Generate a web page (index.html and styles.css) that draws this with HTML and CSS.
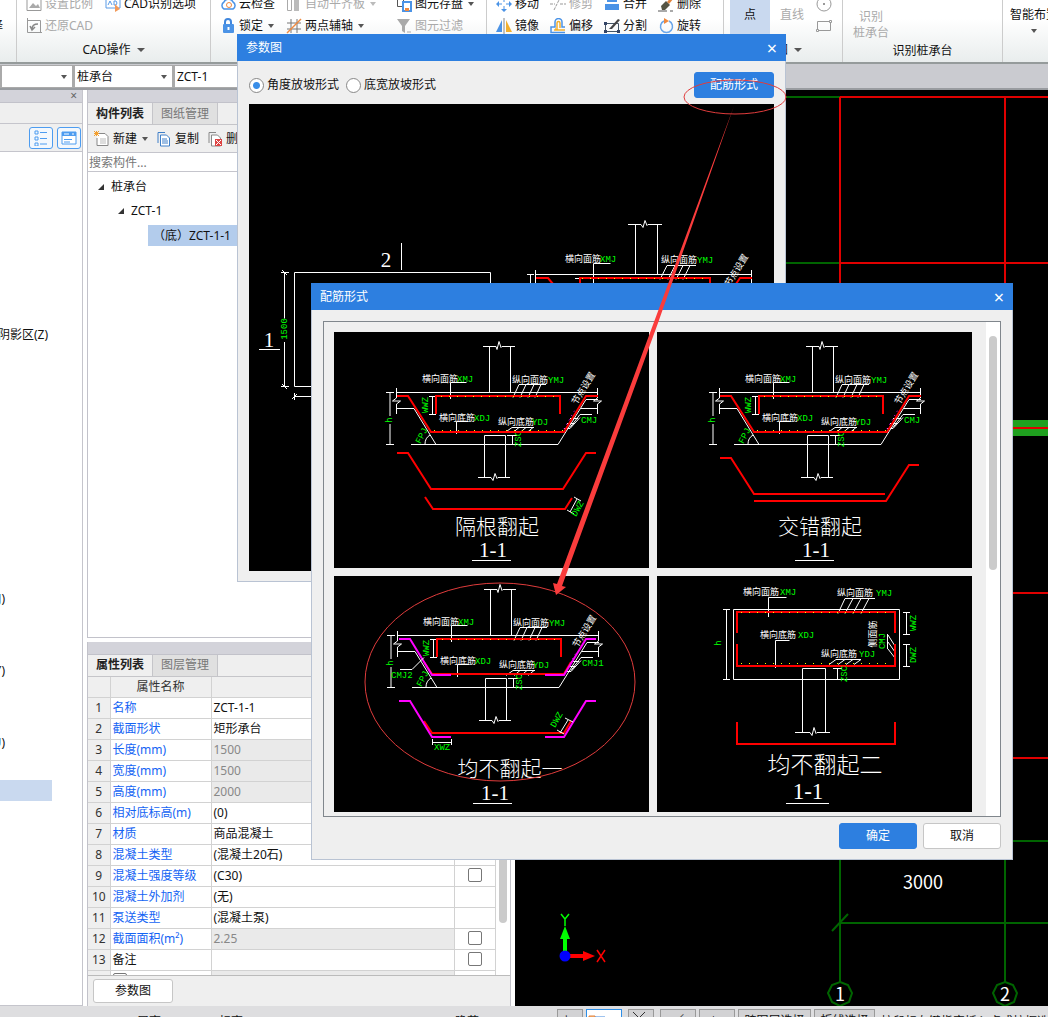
FILE: index.html
```html
<!DOCTYPE html>
<html lang="zh-CN">
<head>
    <meta charset="UTF-8">
    <meta name="viewport" content="width=device-width, initial-scale=1.0">
    <title>桩承台 - 配筋形式</title>
    <link rel="stylesheet" href="styles.css">
</head>
<body>
    <!-- Ribbon -->
    <header class="ribbon">
        <div class="group g-edge"><div class="tools"><button class="tool">选择</button></div><div class="group-label"></div></div>
        <div class="group g-cad">
            <div class="tools">
                <button class="tool" disabled><svg class="icon" viewBox="0 0 16 16"><path d="M1 2.500h14v12H1z" fill="none" stroke="#999"/><path d="M3 12l4-5 3 3 2-2 2 4z" fill="#aaa"/></svg>设置比例</button>
                <button class="tool"><svg class="icon" viewBox="0 0 16 16"><path d="M1 3h14v9H1z" fill="none" stroke="#5a9be6"/><path d="M3 9l2-4 2 4M9 5v4h2l1-2-1-2z" fill="none" stroke="#5a9be6"/><path d="M10 8l5 5-5 3z" fill="#f29a5a"/></svg>CAD识别选项</button>
                <button class="tool" disabled><svg class="icon" viewBox="0 0 16 16"><path d="M1.500 0v14.500H14M1.500 2.500h13V14M12 14.500h4" fill="none" stroke="#999"/><path d="M6 11c0-3 2-5 6-5M4 8l2 4 3-3" fill="none" stroke="#888" stroke-width="1.500"/></svg>还原CAD</button>
            </div>
            <div class="group-label">CAD操作 <i class="caret"></i></div>
        </div>
        <div class="group g-common">
            <div class="tools">
                <button class="tool"><svg class="icon" viewBox="0 0 16 16"><path d="M4 13a4 4 0 010-7 5 5 0 019 0 4 4 0 010 7z" fill="none" stroke="#4b93e6" stroke-width="1.500"/><circle cx="9" cy="9" r="2.500" fill="none" stroke="#f0893e"/></svg>云检查</button>
                <button class="tool" disabled><svg class="icon" viewBox="0 0 16 16"><path d="M1.500 2.500h4v12h-4z" fill="none" stroke="#aaa"/><path d="M8 2h5v13H8z" fill="#bbb"/></svg>自动平齐板 <i class="caret"></i></button>
                <button class="tool"><svg class="icon" viewBox="0 0 16 16"><path d="M1.500 2.500h6v8h-6z" fill="none" stroke="#555"/><path d="M7 6h8v9H7z" fill="#fff" stroke="#4b93e6" stroke-width="2"/><path d="M9 12h4v3H9z" fill="#f0893e"/></svg>图元存盘 <i class="caret"></i></button>
                <button class="tool"><svg class="icon" viewBox="0 0 16 16"><path d="M5 7V4a3 3 0 016 0v3" fill="none" stroke="#3f86dd" stroke-width="2"/><rect x="3" y="6" width="11" height="9" rx="1" fill="#4b93e6"/><path d="M8.500 9v3" stroke="#fff" stroke-width="2"/></svg>锁定 <i class="caret"></i></button>
                <button class="tool"><svg class="icon" viewBox="0 0 16 16"><path d="M5 1v14M11 1v14M1 5h14M1 11h14" stroke="#777"/><path d="M1 15L15 1" stroke="#f0893e" stroke-width="1.500"/></svg>两点辅轴 <i class="caret"></i></button>
                <button class="tool" disabled><svg class="icon" viewBox="0 0 16 16"><path d="M1 1h13L9 8v7l-3-2V8z" fill="#aaa"/><path d="M11 14h4" stroke="#aaa"/></svg>图元过滤</button>
            </div>
        </div>
        <div class="group g-modify">
            <div class="tools">
                <button class="tool"><svg class="icon" viewBox="0 0 16 16"><path d="M8 0l3 3H5zM8 16l3-3H5zM0 8l3-3v6zM16 8l-3-3v6z" fill="#4b93e6"/><path d="M8 3v3M8 10v3M3 8h3M10 8h3" stroke="#4b93e6"/></svg>移动</button>
                <button class="tool" disabled><svg class="icon" viewBox="0 0 16 16"><path d="M0 8h5M10 8h6M4 14L10 2" stroke="#999" stroke-dasharray="3 1"/></svg>修剪</button>
                <button class="tool"><svg class="icon" viewBox="0 0 16 16"><path d="M3 1h10v5H3zM1 8h14v6H1z" fill="#4b93e6"/></svg>合并</button>
                <button class="tool"><svg class="icon" viewBox="0 0 16 16"><path d="M9 6l5-6 2 2-5 6z" fill="#e2853f"/><path d="M3 10l5-5 4 4-5 5H4z" fill="#554"/><path d="M0 15h9M12 15h3" stroke="#555"/></svg>删除</button>
                <button class="tool"><svg class="icon" viewBox="0 0 16 16"><path d="M6 2v12H0z" fill="#4b93e6"/><path d="M10 2v12h6z" fill="#f3b02e"/><path d="M8 0v16" stroke="#888"/></svg>镜像</button>
                <button class="tool"><svg class="icon" viewBox="0 0 16 16"><path d="M15 14.500H1V9h4V4a3 3 0 017 0v5h3" fill="none" stroke="#4b93e6" stroke-width="1.500"/><path d="M4 12h11M7 10V5a1.500 1.500 0 013 0v5M5 11h3" fill="none" stroke="#f3b02e" stroke-width="1.500"/></svg>偏移</button>
                <button class="tool"><svg class="icon" viewBox="0 0 16 16"><path d="M1.500 5.500h13v8h-13z" fill="none" stroke="#456"/><path d="M0 4h3v3H0zM13 12h3v3h-3zM0 12h3v3H0z" fill="#346"/><path d="M5 11L14 1l2 1-8 9z" fill="#444"/></svg>分割</button>
                <button class="tool"><svg class="icon" viewBox="0 0 16 16"><path d="M6 3a6 6 0 105 0" fill="none" stroke="#6aa6ea" stroke-width="1.500"/><path d="M6 0l5 3-5 3z" fill="#f0893e"/></svg>旋转</button>
            </div>
        </div>
        <div class="group g-draw">
            <div class="tools">
                <button class="big active">点</button>
                <button class="big" disabled>直线</button>
                <div class="shapes">
                    <svg class="icon" viewBox="0 0 16 16"><circle cx="8" cy="8" r="7" fill="none" stroke="#999"/><path d="M7 7h2v2H7z" fill="#999"/></svg>
                    <svg class="icon" viewBox="0 0 16 16"><path d="M1.500 3.500h13v9h-13z" fill="none" stroke="#999"/><path d="M13.500 2.500h2v2h-2zM.500 11.500h2v2h-2z" fill="#fff" stroke="#999"/></svg>
                </div>
            </div>
            <div class="group-label">绘图 <i class="caret"></i></div>
        </div>
        <div class="group g-detect">
            <div class="tools"><button class="big two-line" disabled>识别<br>桩承台</button></div>
            <div class="group-label">识别桩承台</div>
        </div>
        <div class="group g-smart">
            <div class="tools"><button class="big">智能布置<i class="caret"></i></button></div>
        </div>
    </header>

    <!-- Component selectors -->
    <div class="selectors">
        <label class="combo first"><select aria-label="楼层"><option></option></select><i class="caret"></i></label>
        <label class="combo"><select aria-label="构件类型"><option>桩承台</option></select><i class="caret"></i></label>
        <label class="combo"><select aria-label="构件"><option>ZCT-1</option></select><i class="caret"></i></label>
    </div>

    <main class="workspace">
        <aside class="nav">
            <div class="dock-bar"><button class="dock-close" aria-label="关闭">×</button></div>
            <div class="nav-head"></div>
            <div class="nav-tools">
                <button class="view-btn" aria-label="列表"><svg class="icon" viewBox="0 0 16 16"><path d="M2 1h3v3H2zM2 7h3v3H2zM2 13h3v3H2z" fill="none" stroke="#4d9cf0"/><path d="M7 2.500h7M7 8.500h7M7 14h7" stroke="#4d9cf0"/></svg></button>
                <button class="view-btn" aria-label="窗口"><svg class="icon" viewBox="0 0 16 16"><path d="M1 2h14v12H1z" fill="#fff" stroke="#4d9cf0"/><path d="M1 2h14v4H1z" fill="#4d9cf0"/><path d="M3 9.500h8M3 12h6" stroke="#4d9cf0"/><path d="M3 4h5M11 4h2" stroke="#fff"/></svg></button>
            </div>
            <ul class="nav-list">
                <li></li><li></li><li></li><li></li><li></li><li></li><li></li>
                <li>暗柱阴影区(Z)</li>
                <li></li><li></li><li></li><li></li><li></li><li></li><li></li><li></li><li></li><li></li>
                <li class="short">(J)</li><li></li><li></li>
                <li class="short">(Y)</li><li></li><li></li>
                <li class="short">(U)</li><li></li>
                <li class="selected"></li>
            </ul>
        </aside>

        <section class="docks">
            <div class="dock components">
                <div class="dock-bar"></div>
                <div class="tabs"><button class="tab current">构件列表</button><button class="tab">图纸管理</button></div>
                <div class="toolbar">
                    <button class="tool"><svg class="icon" viewBox="0 0 16 16"><path d="M4 2.500h7l3 3v9H3V7" fill="#fff" stroke="#888"/><path d="M6 8h6M6 10h6M6 12h6" stroke="#bbb"/><path d="M0 0l5 5M5 0L0 5M2.500 0v5M0 2.500h5" stroke="#f3a030"/></svg>新建 <i class="caret"></i></button>
                    <button class="tool"><svg class="icon" viewBox="0 0 16 16"><path d="M2 12V1.500h7" fill="none" stroke="#3f7fc8"/><path d="M4.500 4h6l3 3v8h-9z" fill="#fff" stroke="#3f7fc8"/><path d="M6 8h5M6 10h6M6 12h6" stroke="#3f7fc8"/></svg>复制</button>
                    <button class="tool"><svg class="icon" viewBox="0 0 16 16"><path d="M2 12V1.500h7" fill="none" stroke="#888"/><path d="M4.500 4h6l3 3v8h-9z" fill="#fff" stroke="#888"/><path d="M8 8h7v7H8z" fill="#d44"/><path d="M9 9l5 5M14 9l-5 5" stroke="#fff"/></svg>删除</button>
                </div>
                <input class="search" type="text" placeholder="搜索构件..." aria-label="搜索构件">
                <ul class="tree">
                    <li class="lv1"><i class="twist"></i>桩承台</li>
                    <li class="lv2"><i class="twist"></i>ZCT-1</li>
                    <li class="lv3"><span>（底）ZCT-1-1</span></li>
                </ul>
            </div>

            <div class="dock properties">
                <div class="dock-bar"></div>
                <div class="tabs"><button class="tab current">属性列表</button><button class="tab">图层管理</button></div>
                <div class="prop-area">
                    <table class="props">
                        <thead><tr><th class="no"></th><th class="name">属性名称</th><th>属性值</th><th class="add">附加</th></tr></thead>
                        <tbody>
                            <tr><th>1</th><td>名称</td><td>ZCT-1-1</td><td></td></tr>
                            <tr><th>2</th><td>截面形状</td><td>矩形承台</td><td></td></tr>
                            <tr class="ro"><th>3</th><td>长度(mm)</td><td>1500</td><td></td></tr>
                            <tr class="ro"><th>4</th><td>宽度(mm)</td><td>1500</td><td></td></tr>
                            <tr class="ro"><th>5</th><td>高度(mm)</td><td>2000</td><td></td></tr>
                            <tr><th>6</th><td>相对底标高(m)</td><td>(0)</td><td></td></tr>
                            <tr><th>7</th><td>材质</td><td>商品混凝土</td><td></td></tr>
                            <tr><th>8</th><td>混凝土类型</td><td>(混凝土20石)</td><td></td></tr>
                            <tr><th>9</th><td>混凝土强度等级</td><td>(C30)</td><td><input type="checkbox" aria-label="混凝土强度等级附加"></td></tr>
                            <tr><th>10</th><td>混凝土外加剂</td><td>(无)</td><td></td></tr>
                            <tr><th>11</th><td>泵送类型</td><td>(混凝土泵)</td><td></td></tr>
                            <tr class="ro"><th>12</th><td>截面面积(m²)</td><td>2.25</td><td><input type="checkbox" aria-label="截面面积附加"></td></tr>
                            <tr class="plain"><th>13</th><td>备注</td><td></td><td><input type="checkbox" aria-label="备注附加"></td></tr>
                            <tr class="ro"><th></th><td><input type="checkbox" aria-label="展开"></td><td></td><td></td></tr>
                        </tbody>
                    </table>
                    <div class="scroll"><div class="thumb"></div></div>
                </div>
                <div class="prop-foot"><button class="btn">参数图</button></div>
            </div>
        </section>

        <!-- Model view -->
        <svg class="model">
            <g fill="none" stroke="#006400" stroke-width="2">
                <path d="M0 7h325M0 173h325M325 700v192M490 700v192M325 833h400M317 841l16-17M490 751h100"/>
                <path d="M325 892l8 3 4 8-3 9-9 4-8-4-4-9 4-8zM490 892l8 3 4 8-3 9-9 4-8-4-4-9 4-8z"/>
            </g>
            <path d="M490 338h700" stroke="#1fa01f" stroke-width="16"/>
            <path d="M325 7h900M325 173h900M325 503h900M325 668h900M325 338h900M325 7v600M490 7v600" fill="none" stroke="#e00000" stroke-width="2"/>
            <g class="model-text">
                <text x="408" y="799">3000</text>
                <text x="325" y="911">1</text>
                <text x="490" y="911">2</text>
            </g>
            <path d="M50 866V848" stroke="#0f0" stroke-width="4"/>
            <path d="M50 836l5 13H45z" fill="#0f0"/>
            <path d="M46 824l4 5 4-5M50 829v7" fill="none" stroke="#0f0" stroke-width="1.500"/>
            <path d="M50 866h19" stroke="red" stroke-width="4"/>
            <path d="M80 866l-12-5v10z" fill="red"/>
            <path d="M82 860l8 12M90 860l-8 12" stroke="red" stroke-width="1.500"/>
            <circle cx="50" cy="866" r="5.500" fill="#00f"/>
        </svg>
    </main>

    <footer class="status">
        <span class="st-a">层高:</span><span class="st-b">标高:</span><span class="st-c">隐藏:0</span>
        <button class="st-btn">∟</button>
        <button class="st-btn on" aria-label="捕捉"><svg viewBox="0 0 20 14"><path d="M2 2h6v12H2z" fill="#f6b27a" stroke="#e2853f"/><path d="M8 3h10v10" fill="none" stroke="#3f86dd"/></svg></button>
        <button class="st-btn cross" aria-label="交点"><svg viewBox="0 0 20 14"><path d="M4 1l12 12M16 1L4 13" stroke="#333"/></svg></button>
        <button class="st-btn wide">∕</button>
        <button class="st-btn wide">⊢</button>
        <button class="st-btn text">跨图层选择</button>
        <button class="st-btn text2">折线选择</button>
        <span class="st-tip">按鼠标左键指定插入点或拉框选择构件图元</span>
    </footer>

    <!-- Parameter drawing dialog -->
    <div class="dialog param-dialog">
        <div class="title">参数图<button class="close" aria-label="关闭">×</button></div>
        <div class="param-body">
            <div class="param-options">
                <label><input type="radio" name="slope" checked>角度放坡形式</label>
                <label><input type="radio" name="slope">底宽放坡形式</label>
                <button class="btn primary">配筋形式</button>
            </div>
            <svg class="param-view cad">
                <g class="w">
                    <path d="M45.500 168.500h196v114h-196zM152.500 139v27M10 245.500h21M35.500 168.500v46M35.500 238v44.500M32 168.500h8M32 282.500h8M33 166l5 5M33 280l5 5M45.500 289v7M43 295l5-5M45 292.500h60"/>
                    <path d="M379 120.500h13l2 3 2-7 2 5 1-1h14M386.500 121v49.500M408.500 121v49.500M286 170.500h217M286.500 166v14M502.500 166v14M344.500 180v-20.500h17M278 170.500h7M281.500 170.500v10M326 174.500h7"/>
                    <path d="M447 161.500h-29l-7 14M426 161.500l-7 14M434 161.500l-7 14M441 161.500l-7 14"/>
                </g>
                <path class="r" d="M287 174h12l5 6M331 180v-6h130v6M503 174h-12l-4 6"/>
                <path class="dots" d="M333 174.500h126"/>
                <text class="big-t mid" x="137" y="163">2</text>
                <text class="big-t mid" x="20" y="243">1</text>
                <text class="g mid" transform="translate(38 225) rotate(-90)">1500</text>
                <text x="316" y="158">横向面筋</text><text class="g" x="351" y="158">XMJ</text>
                <text x="412" y="159">纵向面筋</text><text class="g" x="448" y="159">YMJ</text>
                <text class="mid" transform="translate(490 168) rotate(-58)">节点设置</text>
            </svg>
        </div>
    </div>

    <!-- Rebar form dialog -->
    <div class="dialog rebar-dialog">
        <div class="title">配筋形式<button class="close" aria-label="关闭">×</button></div>
        <div class="rebar-body">
            <div class="gallery">
                <div class="cards">
                    <svg class="cad card" viewBox="0 0 315 236">
                        <defs>
                            <!-- section outline, labels and top bars shared by the sloped forms -->
                            <g id="section">
                                <g class="w">
                                    <path d="M149 14.500h13l1 3 2-8 2 6 1-1h13M155.500 15v45M176.500 15v45M62 60.500h202M62.500 56v10l-4 3h8l-4 3v10M263.500 56v10l-4 3h8l-4 3v10M62 76.500h18l22 36M77 112.500h147l28-45h12M247 76.500h17"/>
                                    <path d="M52 60.500h8M52 112.500h8M56 61v23M56 92v20M95 64.500h7M95 82.500h7M98.500 64v18M116.500 67v-16.500h16M122.500 102v-12.500h12"/>
                                    <path d="M212 52.500h-27l-6 13M192 52.500l-6 13M200 52.500l-6 13M207 52.500l-6 13M200 95.500h-22l-7 5M185 95.500l-6 5M192 95.500l-6 5M199 95.500l-6 5"/>
                                    <path d="M144 145.500h13l2 3 2-7 2 5 1-1h12M150.500 145v-41.500h21V145M173 103.500h10M178.500 104v8M91 112q0-6 5-9"/>
                                    <path d="M258 82.500h-12l-10 13M236 86.500h8M233 91.500h8M230 96.500h6l10-11"/>
                                </g>
                                <path class="r" d="M102 82V64h124v18"/>
                                <path class="dots" d="M107 64.500h115M100 98.500h130"/>
                                <path d="M230 97l12-21" fill="none" stroke="#f0f" stroke-dasharray="1 4"/>
                                <text x="88" y="50">横向面筋</text><text class="g" x="123" y="50">XMJ</text>
                                <text x="178" y="51">纵向面筋</text><text class="g" x="214" y="51">YMJ</text>
                                <text x="105" y="89">横向底筋</text><text class="g" x="140" y="89">XDJ</text>
                                <text x="164" y="93">纵向底筋</text><text class="g" x="198" y="93">YDJ</text>
                                <text class="mid" transform="translate(252 58) rotate(-58)">节点设置</text>
                                <text class="g mid" transform="translate(94 73) rotate(-90)">WWZ</text>
                                <text class="g mid" transform="translate(58 88) rotate(-90)">h</text>
                                <text class="g mid" transform="translate(90 105) rotate(-62)">FPJ</text>
                                <text class="g mid" transform="translate(187 107) rotate(-90)">ZSC</text>
                            </g>
                        </defs>
                        <use href="#section"/>
                        <path class="r" d="M63 64h11l23 36h133l22-36h12M63 121h11l23 36h132l23-36h10M91 165l8 12h132l7-11"/>
                        <path class="w" d="M240 165l7 4M233 178l7 4M243 167l-7 13"/>
                        <text class="g" x="247" y="91">CMJ</text>
                        <text class="g mid" transform="translate(246 178) rotate(-60)">DWZ</text>
                        <text class="big-t mid" x="163" y="202">隔根翻起</text>
                        <text class="big-t mid" x="159" y="225">1-1</text>
                        <path class="w" d="M138 228.500h39"/>
                    </svg>
                    <svg class="cad card" viewBox="0 0 315 236">
                        <use href="#section"/>
                        <path class="r" d="M63 64h11l23 36h133l22-36h12M63 126h11l23 36h131M97 169h132l23-36h10"/>
                        <text class="g" x="247" y="91">CMJ</text>
                        <text class="big-t mid" x="163" y="202">交错翻起</text>
                        <text class="big-t mid" x="159" y="225">1-1</text>
                        <path class="w" d="M138 228.500h39"/>
                    </svg>
                    <svg class="cad card" viewBox="0 0 315 236">
                        <use href="#section" x="1" y="-1"/>
                        <path class="r" d="M90 86l8 12h132l7-12M90 145l8 12h132l7-12"/>
                        <path class="m" d="M65 63h11l22 36h19M211 99h19l22-36h10M65 125h11l22 36h19M211 161h19l22-36h10"/>
                        <path class="w" d="M66 93.500h12l12-12M98.500 163v6M117.500 163v6M98 166.500h19M231 142l8 4M223 154l7 4M234 144l-8 13"/>
                        <text class="g" x="57" y="102">CMJ2</text>
                        <text class="g" x="248" y="90">CMJ1</text>
                        <text class="g" x="100" y="174">XWZ</text>
                        <text class="g mid" transform="translate(225 145) rotate(-60)">DWZ</text>
                        <text class="big-t mid" x="176" y="200">均不翻起一</text>
                        <text class="big-t mid" x="161" y="224">1-1</text>
                        <path class="w" d="M139 227.500h39"/>
                    </svg>
                    <svg class="cad card" viewBox="0 0 315 236">
                        <g class="w">
                            <path d="M76.500 33.500h166v70h-166zM66 33.500h7M66 103.500h7M69.500 34v69M111.500 41v-19.500h18M118.500 92v-27.500h14M246 36.500h7M246 58.500h7M249.500 37v21M246 68.500h7M246 90.500h7M249.500 69v21"/>
                            <path d="M218 22.500h-30l-7 15M196 22.500l-8 15M204 22.500l-8 15M212 22.500l-8 15M204 83.500h-25l-7 5M188 83.500l-7 5M196 83.500l-7 5M204 83.500l-7 5M230.500 58v15M231 59l7 11M231 66l7 10M231 73l7 9"/>
                            <path d="M138 156.500h15l2 3 2-8 2 6 1-1h13M145.500 156v-63.500h23V156M176 92.500h9M180.500 93v10M129 227.500h43"/>
                        </g>
                        <path class="r" d="M80 57V36h158v21M80 68v22h158V68M80 146v22h158v-22"/>
                        <path class="dots" d="M84 36.500h150M84 87.500h150"/>
                        <text x="86" y="19">横向面筋</text><text class="g" x="123" y="19">XMJ</text>
                        <text x="180" y="20">纵向面筋</text><text class="g" x="219" y="20">YMJ</text>
                        <text x="103" y="62">横向底筋</text><text class="g" x="141" y="62">XDJ</text>
                        <text x="164" y="81">纵向底筋</text><text class="g" x="202" y="81">YDJ</text>
                        <text class="mid" transform="translate(219 58) rotate(-90)">侧面筋</text>
                        <text class="g mid" transform="translate(228 65) rotate(-90)">CMJ</text>
                        <text class="g mid" transform="translate(259 47) rotate(-90)">WWZ</text>
                        <text class="g mid" transform="translate(259 79) rotate(-90)">DWZ</text>
                        <text class="g mid" transform="translate(190 98) rotate(-90)">ZSC</text>
                        <text class="g mid" transform="translate(64 67) rotate(-90)">h</text>
                        <text class="big-t mid wide-t" x="168" y="197">均不翻起二</text>
                        <text class="big-t mid wide-t" x="151" y="223">1-1</text>
                    </svg>
                </div>
                <div class="scroll"><div class="thumb"></div></div>
            </div>
            <div class="rebar-foot">
                <button class="btn primary">确定</button>
                <button class="btn">取消</button>
            </div>
        </div>
    </div>

    <!-- Red markup -->
    <svg class="markup">
        <ellipse cx="735" cy="97" rx="51" ry="17"/>
        <ellipse cx="500" cy="682" rx="135" ry="99"/>
        <path d="M734 106L654 322 557 584l-4-1 3 12 10-8-4-1 96-263z"/>
    </svg>
</body>
</html>
```
FILE: styles.css
```css
* {
    box-sizing: border-box;
}
body {
    margin: 0;
    height: 100vh;
    display: flex;
    flex-direction: column;
    overflow: hidden;
    position: relative;
    background: #fff;
    color: #111;
    font-family: "Noto Sans", "Noto Sans CJK SC", sans-serif;
    font-size: 12px;
    line-height: 16px;
}
button, input, select {
    font: inherit;
    color: inherit;
}
button {
    border: 0;
    padding: 0;
    background: none;
    white-space: nowrap;
}
ul {
    list-style: none;
    margin: 0;
    padding: 0;
}
.icon {
    width: 16px;
    height: 16px;
    flex: none;
}
.caret {
    display: inline-block;
    border: 3px solid transparent;
    border-top: 4px solid #555;
    border-bottom: 0;
    flex: none;
}

/* ribbon */
.ribbon {
    flex: none;
    height: 64px;
    display: flex;
    align-items: flex-end;
    overflow: hidden;
    background: linear-gradient(#fff 30%, #e9eded);
    border-bottom: 2px solid #959b9b;
}
.group {
    flex: none;
    height: 100px;
    display: flex;
    flex-direction: column;
    justify-content: flex-end;
    padding-bottom: 2px;
    border-right: 1px solid #ccc;
    overflow: hidden;
}
.tools {
    display: grid;
    grid-auto-rows: 22px;
}
.group-label {
    height: 20px;
    margin-top: 3px;
    display: flex;
    justify-content: center;
    align-items: center;
    gap: 6px;
}
.group-label .caret {
    border-width: 4px 4px 0;
}
.tool {
    display: flex;
    align-items: center;
    gap: 3px;
}
.tool .caret {
    margin-left: 2px;
}
button:disabled {
    color: #aaa;
}
button:disabled .caret {
    border-top-color: #bbb;
}
.g-edge {
    width: 17px;
}
.g-edge .tools {
    justify-content: end;
    padding-right: 13px;
}
.g-cad {
    width: 194px;
}
.g-cad .tools {
    padding-left: 9px;
    grid-template-columns: 79px auto;
}
.g-common {
    width: 276px;
    padding-bottom: 25px;
}
.g-common .tools {
    padding-left: 9px;
    grid-template-columns: 66px 110px auto;
}
.g-modify {
    width: 237px;
    padding-bottom: 25px;
}
.g-modify .tools {
    padding-left: 9px;
    grid-template-columns: repeat(4, 54px);
}
.g-draw {
    width: 119px;
}
.g-draw .tools, .g-detect .tools, .g-smart .tools {
    display: flex;
}
.g-draw .tools {
    padding-left: 6px;
}
.big {
    flex: none;
    display: flex;
    flex-direction: column;
    align-items: center;
    justify-content: flex-end;
    width: 40px;
    height: 60px;
    padding-bottom: 14px;
}
.g-draw .big:disabled {
    width: 44px;
}
.big.active {
    background: #c9d9ef;
}
.shapes {
    display: flex;
    flex-direction: column;
    justify-content: flex-end;
    gap: 6px;
    padding: 0 0 3px 2px;
}
.g-detect {
    width: 160px;
    padding-bottom: 1px;
}
.g-detect .group-label {
    margin-top: 0;
}
.g-detect .big {
    width: 56px;
    padding-bottom: 0;
}
.g-smart {
    flex: 1;
    border-right: 0;
    padding-bottom: 25px;
}
.g-smart .big {
    width: 62px;
    padding-bottom: 4px;
    gap: 6px;
}

/* selectors */
.selectors {
    flex: none;
    height: 26px;
    display: flex;
    padding-top: 1px;
    background: #cacbd0;
    border-bottom: 2px solid #999ca0;
}
.combo {
    position: relative;
    width: 100px;
    display: flex;
    background: #fff;
    border: 1px solid #aaa;
    border-left-width: 2px;
}
.combo.first {
    width: 73px;
}
.combo select {
    appearance: none;
    width: 100%;
    padding: 0 2px;
    border: 0;
    background: none;
}
.combo .caret {
    position: absolute;
    right: 5px;
    top: 9px;
}

/* workspace */
.workspace {
    flex: 1;
    min-height: 0;
    display: flex;
}
.nav {
    flex: none;
    width: 83px;
    display: flex;
    flex-direction: column;
    overflow: hidden;
    border-right: 1px solid #c5c5cc;
    border-bottom: 1px solid #c5c5cc;
}
.dock-bar {
    flex: none;
    height: 13px;
    display: flex;
    justify-content: flex-end;
    align-items: center;
    background: #d3d3da;
    border-bottom: 1px solid #c2c2ca;
}
.dock-close {
    padding-right: 5px;
    line-height: 12px;
    color: #666;
}
.nav-head {
    height: 21px;
    background: #efefef;
    border-bottom: 1px solid #c5c5cc;
}
.nav-tools {
    height: 28px;
    display: flex;
    justify-content: flex-end;
    align-items: center;
    gap: 4px;
    padding-right: 1px;
    background: #efefef;
    border-bottom: 1px solid #c5c5cc;
}
.view-btn {
    width: 24px;
    height: 22px;
    display: flex;
    align-items: center;
    justify-content: center;
    background: #f3f8fd;
    border: 1px solid #4d9cf0;
    border-radius: 3px;
}
.nav-list {
    padding-top: 3px;
}
.nav-list li {
    height: 24px;
    width: 48px;
    display: flex;
    align-items: center;
    justify-content: flex-end;
    white-space: nowrap;
}
.nav-list .short {
    width: 5px;
}
.nav-list .selected {
    height: 21px;
    width: 52px;
    margin-top: 1px;
    background: #c9d9ef;
}
.docks {
    flex: none;
    width: 432px;
    padding: 0 4px;
    display: flex;
    flex-direction: column;
    gap: 4px;
}
.dock {
    min-height: 0;
    display: flex;
    flex-direction: column;
    border: 1px solid #c2c2ca;
    border-top: 0;
}
.components {
    flex: 3 1 0;
}
.properties {
    flex: 2 1 0;
    background: #efefef;
    border-bottom: 0;
}
.tabs {
    flex: none;
    height: 22px;
    display: flex;
    background: #efefef;
    border-bottom: 1px solid #c5c5c9;
}
.tab {
    width: 65px;
    color: #777;
    background: #e0e0e0;
    border: 1px solid #c5c5c9;
    border-width: 0 1px 0 0;
}
.tab.current {
    color: #222;
    font-weight: bold;
    background: #efefef;
}
.toolbar {
    height: 28px;
    display: flex;
    align-items: center;
    gap: 8px;
    padding-left: 6px;
    background: #efefef;
    border-bottom: 1px solid #c5c5cc;
}
.search {
    height: 19px;
    padding: 0 1px;
    border: 0;
    border-bottom: 1px solid #c5c5cc;
}
.search::placeholder {
    color: #777;
}
.tree {
    padding-top: 3px;
}
.tree li {
    height: 24px;
    display: flex;
    align-items: center;
    gap: 7px;
}
.twist {
    border: 3px solid #333;
    border-top-color: transparent;
    border-left-color: transparent;
}
.lv1 {
    padding-left: 10px;
}
.lv2 {
    padding-left: 30px;
}
.lv3 {
    padding-left: 60px;
}
.lv3 span {
    flex: 1;
    line-height: 21px;
    padding-left: 5px;
    background: #b3ccec;
}
.prop-area {
    flex: 1;
    min-height: 0;
    display: flex;
    overflow: hidden;
    background: #fff;
    border-bottom: 1px solid #bbb;
}
.props {
    flex: 1;
    height: 0;
    border-collapse: collapse;
    table-layout: fixed;
}
.props th, .props td {
    height: 21px;
    padding: 0 2px;
    line-height: 16px;
    border: 1px solid #d2d2d2;
    border-top: 0;
    border-left: 0;
    overflow: hidden;
    white-space: nowrap;
}
.props th {
    padding: 0;
    font-weight: normal;
    color: #333;
    background: #efefef;
}
.props .no {
    width: 22px;
}
.props .name {
    width: 101px;
}
.props .add {
    width: 41px;
}
.props td:nth-child(2) {
    color: #1464f4;
}
.props .plain td:nth-child(2) {
    color: #111;
}
.props .ro td:nth-child(3) {
    color: #888;
    background: #eaeaea;
}
.props td:last-child {
    text-align: center;
}
.props input {
    appearance: none;
    display: inline-block;
    width: 14px;
    height: 14px;
    margin: 0;
    vertical-align: top;
    background: #fff;
    border: 1px solid #777;
    border-radius: 2px;
}
.scroll {
    flex: none;
    width: 14px;
    padding: 14px 3px 0;
    background: #fff;
}
.thumb {
    background: #cbcbcb;
    border-radius: 4px;
}
.prop-area .thumb {
    height: 232px;
}
.prop-foot {
    flex: none;
    height: 30px;
    padding: 3px 5px;
}
.prop-foot .btn {
    width: 80px;
    height: 24px;
}
.btn {
    width: 78px;
    height: 26px;
    background: #fff;
    border: 1px solid #c6c6c6;
    border-radius: 3px;
}
.btn.primary {
    color: #fff;
    background: #2d7fe0;
    border-color: #2d7fe0;
}
.model {
    flex: 1;
    min-width: 0;
    height: 100%;
    background: #000;
}
.model-text {
    fill: #fff;
    font-size: 18px;
    text-anchor: middle;
    font-family: "Noto Sans CJK SC", sans-serif;
}

/* status bar */
.status {
    flex: none;
    height: 11px;
    display: flex;
    gap: 3px;
    overflow: hidden;
    padding-top: 3px;
    background: #dedee0;
    white-space: nowrap;
}
.status span {
    flex: none;
    line-height: 26px;
}
.st-a {
    width: 79px;
    margin-left: 137px;
}
.st-b {
    width: 233px;
}
.st-c {
    width: 99px;
}
.st-btn {
    flex: none;
    width: 26px;
    height: 24px;
    background: #d2d2d4;
    border: 1px solid #999;
}
.st-btn.on {
    width: 36px;
    background: #fff;
    border-color: #2d8fe8;
}
.st-btn svg {
    width: 20px;
    height: 14px;
    display: block;
}
.st-btn.cross {
    margin: 0 3px;
    padding-bottom: 6px;
}
.st-btn.wide {
    width: 36px;
}
.st-btn.text {
    width: 73px;
}
.st-btn.text2 {
    width: 61px;
}
.st-tip {
    margin-left: 3px;
}

/* dialogs */
.dialog {
    position: absolute;
    display: flex;
    flex-direction: column;
    background: #efefef;
    border: 1px solid #b9c3d3;
    border-top: 0;
}
.title {
    flex: none;
    height: 27px;
    margin: 0 -1px;
    padding: 0 9px;
    display: flex;
    justify-content: space-between;
    align-items: center;
    color: #fff;
    background: #2d7fe0;
}
.close {
    font-size: 18px;
    line-height: 18px;
}
.param-dialog {
    left: 237px;
    top: 34px;
    width: 549px;
    height: 548px;
}
.param-body {
    flex: 1;
    display: flex;
    flex-direction: column;
    padding: 11px;
    padding-bottom: 10px;
}
.param-options {
    display: flex;
    align-items: center;
    gap: 7px;
    margin-bottom: 6px;
}
.param-options label {
    display: flex;
    align-items: center;
    gap: 3px;
}
.param-options .btn {
    width: 80px;
    margin-left: auto;
}
.param-options input {
    appearance: none;
    width: 15px;
    height: 15px;
    margin: 0;
    background: #fff;
    border: 1px solid #888;
    border-radius: 50%;
}
.param-options input:checked {
    background: radial-gradient(circle, #3a8ee8 3px, #fff 4px);
}
.param-view {
    flex: 1;
    width: 100%;
}
.rebar-dialog {
    left: 311px;
    top: 283px;
    width: 702px;
}
.rebar-body {
    padding: 11px;
    padding-bottom: 10px;
}
.gallery {
    display: flex;
    border: 1px solid #80868c;
}
.cards {
    flex: 1;
    display: grid;
    grid-template-columns: 1fr 1fr;
    gap: 8px;
    padding: 10px 14px 4px 10px;
}
.card {
    display: block;
    width: 100%;
}
.gallery .thumb {
    height: 234px;
}
.rebar-foot {
    display: flex;
    justify-content: flex-end;
    gap: 6px;
    padding-top: 6px;
}

/* drawings */
.cad {
    background: #000;
    fill: #fff;
    font-family: "Liberation Mono", "Noto Sans CJK SC", monospace;
    font-size: 9px;
}
.cad .w {
    fill: none;
    stroke: #fff;
}
.cad .r {
    fill: none;
    stroke: red;
    stroke-width: 2;
}
.cad .m {
    fill: none;
    stroke: #f0f;
    stroke-width: 2;
}
.cad .dots {
    stroke: #ff0;
    stroke-dasharray: 1 7;
}
.cad .g {
    fill: #0f0;
    font-size: 9px;
}
.cad .mid {
    text-anchor: middle;
}
.cad .big-t {
    font-family: "Liberation Serif", "Noto Sans CJK SC", serif;
    font-size: 21px;
    font-weight: 300;
}
.cad .wide-t {
    font-size: 23px;
}
.markup {
    position: absolute;
    left: 0;
    top: 0;
    width: 100%;
    height: 100%;
    pointer-events: none;
}
.markup ellipse {
    fill: none;
    stroke: #e03c3c;
}
.markup path {
    fill: #fa3c3c;
}
```
